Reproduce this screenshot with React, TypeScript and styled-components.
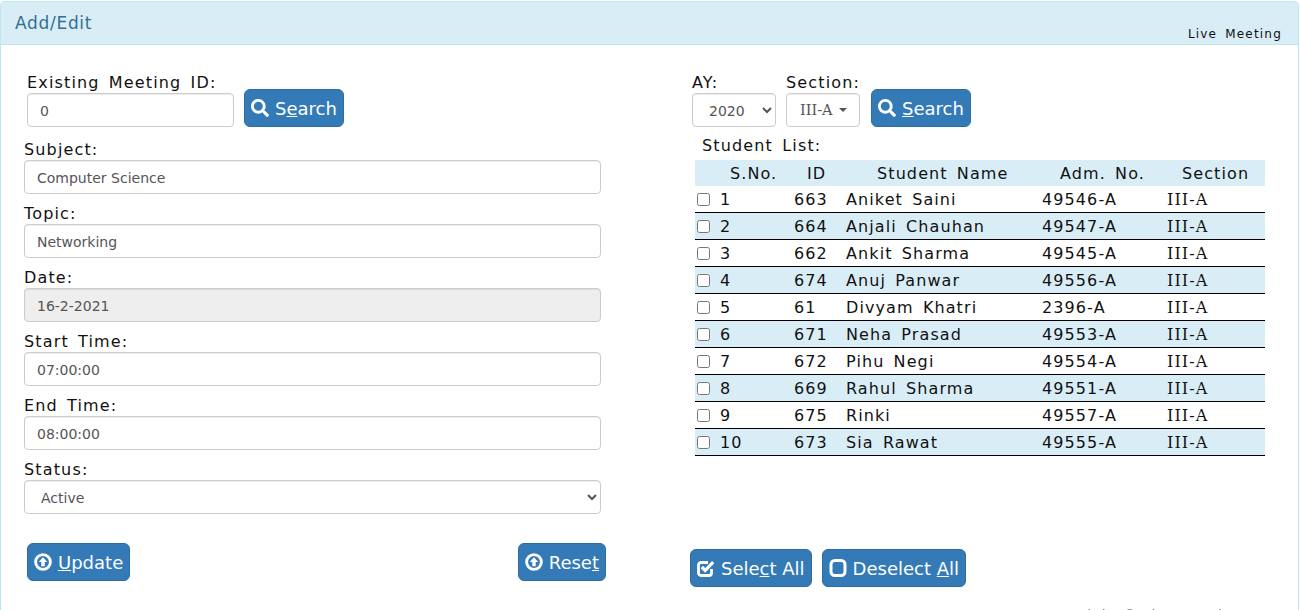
import React from 'react';
import styled, { createGlobalStyle } from 'styled-components';
import { FaSearch } from 'react-icons/fa';

const GlobalStyle = createGlobalStyle`
	html, body {
		margin: 0;
		height: 610px;
		overflow: hidden;
		background: #fff;
	}
	* {
		box-sizing: border-box;
	}
	body {
		font-family: 'DejaVu Sans', Verdana, sans-serif;
		color: #111;
	}
`;

const Panel = styled.div`
	margin: 1px 0 0 0;
	width: 1299px;
	height: 640px;
	border: 1px solid #bce8f1;
	border-radius: 4px 4px 0 0;
`;

const Heading = styled.div`
	height: 43px;
	background: #d9edf7;
	border-bottom: 1px solid #bce8f1;
	display: flex;
	justify-content: space-between;
	padding: 0 16px 0 14px;
`;

const Title = styled.h3`
	margin: 10px 0 0;
	font-size: 17px;
	line-height: 22px;
	letter-spacing: 0.7px;
	font-weight: 400;
	color: #31708f;
`;

const LiveLink = styled.span`
	margin-top: 24px;
	font-size: 12px;
	line-height: 16px;
	letter-spacing: 1.2px;
	word-spacing: 3px;
	color: #111;
`;

const Body = styled.div`
	display: flex;
	padding: 27px 0 0 23px;
`;

const LeftColumn = styled.div`
	width: 583px;
`;

const RightColumn = styled.div`
	margin-left: 85px;
	width: 575px;
`;

const SearchRow = styled.div<{ $indent?: number }>`
	display: flex;
	align-items: flex-end;
	margin-left: ${p => p.$indent ?? 0}px;
`;

const Label = styled.label`
	display: block;
	height: 21px;
	font-size: 16px;
	line-height: 22px;
	letter-spacing: 1.15px;
	word-spacing: 3px;
	color: #111;
	white-space: nowrap;
`;

const Field = styled.div<{ $first?: boolean }>`
	height: 64px;
	margin-top: ${p => (p.$first ? 12 : 0)}px;
`;

const inputLook = `
	display: block;
	height: 34px;
	border: 1px solid #ccc;
	border-radius: 4px;
	background: #fff;
	color: #555;
	font-size: 14px;
	font-family: Tahoma, 'DejaVu Sans', sans-serif;
	box-shadow: inset 0 1px 1px rgba(0, 0, 0, 0.075);
`;

const Input = styled.input<{ $width?: number }>`
	${inputLook}
	width: ${p => p.$width ?? 577}px;
	padding: 8px 12px 6px;
	&:disabled {
		background: #eee;
		opacity: 1;
	}
`;

const Select = styled.select<{ $width?: number }>`
	${inputLook}
	width: ${p => p.$width ?? 577}px;
	padding: 8px 12px 6px;
`;

const SelectField = styled.div<{ $gap?: number }>`
	margin-left: ${p => p.$gap ?? 0}px;
`;

const DropdownToggle = styled.div`
	${inputLook}
	width: 74px;
	display: flex;
	align-items: center;
	padding-left: 13px;
	font-family: 'DejaVu Serif', serif;
	font-size: 14.5px;
`;

const Caret = styled.span`
	margin-left: 6px;
	border-top: 4px solid #555;
	border-left: 4px solid transparent;
	border-right: 4px solid transparent;
`;

const Button = styled.button<{ $gap?: number }>`
	height: 38px;
	margin-left: ${p => p.$gap ?? 0}px;
	display: inline-flex;
	align-items: center;
	gap: 6px;
	padding: 0 6px;
	background: #337ab7;
	border: 1px solid #2e6da4;
	border-radius: 6px;
	color: #fff;
	font-family: 'DejaVu Sans', sans-serif;
	font-size: 18px;
	font-weight: 400;
	white-space: nowrap;
	svg {
		flex: none;
	}
`;

const Key = styled.u`
	text-decoration: underline;
`;

const ButtonRow = styled.div`
	display: flex;
	justify-content: space-between;
	margin: 20px 0 0 3px;
	width: 579px;
`;

const ListLabel = styled(Label)`
	margin: 8px 0 0 10px;
	height: 25px;
`;

const Table = styled.table`
	width: 570px;
	margin-left: 3px;
	border-collapse: separate;
	border-spacing: 0;
	table-layout: fixed;
	font-size: 16px;
	letter-spacing: 1.1px;
	word-spacing: 3px;
`;

const HeadRow = styled.tr`
	height: 26px;
	background: #d9edf7;
`;

const HeadCell = styled.th<{ $width: number; $pad: number }>`
	width: ${p => p.$width}px;
	padding: 0 0 0 ${p => p.$pad}px;
	font-weight: 400;
	text-align: left;
	white-space: nowrap;
`;

const Row = styled.tr<{ $even: boolean }>`
	height: 27px;
	background: ${p => (p.$even ? '#d9edf7' : '#fff')};
`;

const Cell = styled.td`
	padding: 0;
	white-space: nowrap;
	border-bottom: 1px solid #000;
`;

const NumberCell = styled(Cell)`
	padding-left: 2px;
`;

const SectionCell = styled(Cell)`
	font-family: 'DejaVu Serif', serif;
`;

const NumberWrap = styled.span`
	display: flex;
	align-items: center;
`;

const Tick = styled.input`
	width: 13px;
	height: 13px;
	margin: 0 10px 0 0;
`;

const SelectRow = styled.div`
	display: flex;
	gap: 10px;
	margin: 93px 0 0 -2px;
`;

const FooterNote = styled.div`
	margin: 20px 0 0 350px;
	font-size: 14px;
	line-height: 16px;
	letter-spacing: 0.8px;
	color: #777;
	white-space: nowrap;
`;

const CircleUpIcon = () => (
	<svg width="18" height="18" viewBox="0 0 19 19" fill="none">
		<circle cx="9.5" cy="9.5" r="7.8" stroke="#fff" strokeWidth="3" />
		<path d="M9.5 4.5 L14 9.5 H11.3 V14 H7.7 V9.5 H5 Z" fill="#fff" />
	</svg>
);

const CheckedIcon = () => (
	<svg width="18" height="20" viewBox="0 0 18 20" fill="none">
		<path
			d="M14.5 11 V15 A2.5 2.5 0 0 1 12 17.5 H4 A2.5 2.5 0 0 1 1.5 15 V7 A2.5 2.5 0 0 1 4 4.5 H11"
			stroke="#fff"
			strokeWidth="2.8"
		/>
		<path d="M4.8 9 L8.2 12.4 L16.2 4.2" stroke="#fff" strokeWidth="3.2" />
	</svg>
);

const EmptyBoxIcon = () => (
	<svg width="18" height="20" viewBox="0 0 18 20" fill="none">
		<rect x="2" y="2.5" width="14" height="15" rx="3.8" stroke="#fff" strokeWidth="3" />
	</svg>
);

const students = [
	[1, 663, 'Aniket Saini', '49546-A'],
	[2, 664, 'Anjali Chauhan', '49547-A'],
	[3, 662, 'Ankit Sharma', '49545-A'],
	[4, 674, 'Anuj Panwar', '49556-A'],
	[5, 61, 'Divyam Khatri', '2396-A'],
	[6, 671, 'Neha Prasad', '49553-A'],
	[7, 672, 'Pihu Negi', '49554-A'],
	[8, 669, 'Rahul Sharma', '49551-A'],
	[9, 675, 'Rinki', '49557-A'],
	[10, 673, 'Sia Rawat', '49555-A'],
];

export default function App() {
	return (
		<>
			<GlobalStyle />
			<Panel>
				<Heading>
					<Title>Add/Edit</Title>
					<LiveLink>Live Meeting</LiveLink>
				</Heading>
				<Body>
					<LeftColumn>
						<SearchRow $indent={3}>
							<SelectField>
								<Label>Existing Meeting ID:</Label>
								<Input $width={207} defaultValue="0" />
							</SelectField>
							<Button $gap={10}>
								<FaSearch size={18} />
								<span>
									S<Key>e</Key>arch
								</span>
							</Button>
						</SearchRow>
						<Field $first>
							<Label>Subject:</Label>
							<Input defaultValue="Computer Science" />
						</Field>
						<Field>
							<Label>Topic:</Label>
							<Input defaultValue="Networking" />
						</Field>
						<Field>
							<Label>Date:</Label>
							<Input defaultValue="16-2-2021" disabled />
						</Field>
						<Field>
							<Label>Start Time:</Label>
							<Input defaultValue="07:00:00" />
						</Field>
						<Field>
							<Label>End Time:</Label>
							<Input defaultValue="08:00:00" />
						</Field>
						<Field>
							<Label>Status:</Label>
							<Select defaultValue="Active">
								<option>Active</option>
								<option>Inactive</option>
							</Select>
						</Field>
						<ButtonRow>
							<Button>
								<CircleUpIcon />
								<span>
									<Key>U</Key>pdate
								</span>
							</Button>
							<Button>
								<CircleUpIcon />
								<span>
									Rese<Key>t</Key>
								</span>
							</Button>
						</ButtonRow>
					</LeftColumn>
					<RightColumn>
						<SearchRow>
							<SelectField>
								<Label>AY:</Label>
								<Select $width={84} defaultValue="2020">
									<option>2020</option>
								</Select>
							</SelectField>
							<SelectField $gap={10}>
								<Label>Section:</Label>
								<DropdownToggle>
									III-A
									<Caret />
								</DropdownToggle>
							</SelectField>
							<Button $gap={11}>
								<FaSearch size={18} />
								<span>
									<Key>S</Key>earch
								</span>
							</Button>
						</SearchRow>
						<ListLabel>Student List:</ListLabel>
						<Table>
							<thead>
								<HeadRow>
									<HeadCell $width={99} $pad={35}>S.No.</HeadCell>
									<HeadCell $width={52} $pad={13}>ID</HeadCell>
									<HeadCell $width={196} $pad={31}>Student Name</HeadCell>
									<HeadCell $width={125} $pad={18}>Adm. No.</HeadCell>
									<HeadCell $width={98} $pad={15}>Section</HeadCell>
								</HeadRow>
							</thead>
							<tbody>
								{students.map(([no, id, name, adm], i) => (
									<Row key={id} $even={i % 2 === 1}>
										<NumberCell>
											<NumberWrap>
												<Tick type="checkbox" />
												{no}
											</NumberWrap>
										</NumberCell>
										<Cell>{id}</Cell>
										<Cell>{name}</Cell>
										<Cell>{adm}</Cell>
										<SectionCell>III-A</SectionCell>
									</Row>
								))}
							</tbody>
						</Table>
						<SelectRow>
							<Button>
								<CheckedIcon />
								<span>
									Sele<Key>c</Key>t All
								</span>
							</Button>
							<Button>
								<EmptyBoxIcon />
								<span>
									Deselect <Key>A</Key>ll
								</span>
							</Button>
						</SelectRow>
						<FooterNote>Copyright © Live Meeting</FooterNote>
					</RightColumn>
				</Body>
			</Panel>
		</>
	);
}
